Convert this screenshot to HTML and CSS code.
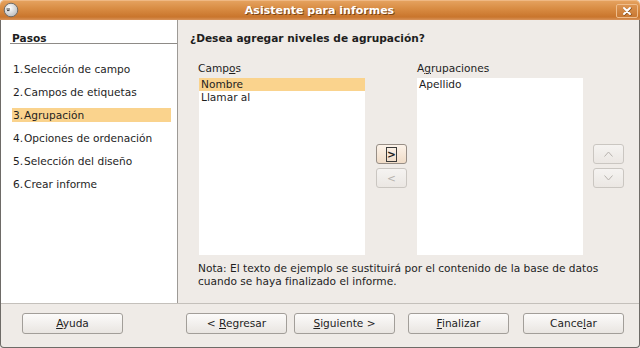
FILE: index.html
```html
<!DOCTYPE html>
<html lang="es">
<head>
    <meta charset="utf-8">
    <title>Asistente para informes</title>
    <link rel="stylesheet" href="styles.css">
</head>
<body>
    <div class="titlebar">
        <svg class="win-icon" width="16" height="16" viewBox="0 0 16 16">
            <defs>
                <radialGradient id="ball" cx="0.4" cy="0.35" r="0.7">
                    <stop offset="0" stop-color="#ffffff"/>
                    <stop offset="1" stop-color="#b9b9b9"/>
                </radialGradient>
            </defs>
            <circle cx="8" cy="8" r="6.8" fill="url(#ball)" stroke="#6e6a66" stroke-width="1"/>
            <path d="M3.5 7h3.5M4 8.6h2.5" stroke="#3b3b3b" stroke-width="1"/>
        </svg>
        <span class="title">Asistente para informes</span>
        <span class="close">
            <svg width="10" height="10" viewBox="0 0 10 10">
                <path d="M2 2l6 6M8 2l-6 6" stroke="#7a4a1e" stroke-width="2.4" stroke-linecap="round" transform="translate(0.5 0.5)"/>
                <path d="M2 2l6 6M8 2l-6 6" stroke="#ffffff" stroke-width="2" stroke-linecap="round"/>
            </svg>
        </span>
    </div>
    <div class="frame">
        <div class="main">
            <!-- lista de pasos -->
            <div class="steps">
                <div class="steps-head">Pasos</div>
                <ul class="step-list">
                    <li><span class="num">1.</span>Selección de campo</li>
                    <li><span class="num">2.</span>Campos de etiquetas</li>
                    <li class="current"><span class="num">3.</span>Agrupación</li>
                    <li><span class="num">4.</span>Opciones de ordenación</li>
                    <li><span class="num">5.</span>Selección del diseño</li>
                    <li><span class="num">6.</span>Crear informe</li>
                </ul>
            </div>
            <div class="page">
                <div class="page-title">¿Desea agregar niveles de agrupación?</div>
                <div class="lists">
                    <div class="col col-fields">
                        <div class="col-label">Camp<u>o</u>s</div>
                        <ul class="listbox">
                            <li class="sel">Nombre</li>
                            <li>Llamar al</li>
                        </ul>
                    </div>
                    <div class="move-btns">
                        <button class="small active"><span class="focus">&gt;</span></button>
                        <button class="small disabled">&lt;</button>
                    </div>
                    <div class="col col-groups">
                        <div class="col-label">A<u>g</u>rupaciones</div>
                        <ul class="listbox">
                            <li>Apellido</li>
                        </ul>
                    </div>
                    <div class="order-btns">
                        <button class="small disabled">
                            <svg width="9" height="6" viewBox="0 0 9 6"><path d="M0.5 5.5L4.5 1l4 4.5" fill="none" stroke="#b6b2ad" stroke-width="1"/></svg>
                        </button>
                        <button class="small disabled">
                            <svg width="9" height="6" viewBox="0 0 9 6"><path d="M0.5 0.5L4.5 5l4-4.5" fill="none" stroke="#b6b2ad" stroke-width="1"/></svg>
                        </button>
                    </div>
                </div>
                <p class="note">Nota: El texto de ejemplo se sustituirá por el contenido de la base de datos<br>cuando se haya finalizado el informe.</p>
            </div>
        </div>
        <div class="footer">
            <button class="btn btn-help"><u>A</u>yuda</button>
            <button class="btn btn-back">&lt; <u>R</u>egresar</button>
            <button class="btn btn-next"><u>S</u>iguiente &gt;</button>
            <button class="btn btn-finish"><u>F</u>inalizar</button>
            <button class="btn btn-cancel">Cance<u>l</u>ar</button>
        </div>
    </div>
</body>
</html>
```

FILE: styles.css
```css
body {
    margin: 0;
    width: 640px;
    height: 348px;
    overflow: hidden;
    font-family: "DejaVu Sans", sans-serif;
    font-size: 10.6px;
    color: #1e1e1e;
    background-color: #efebe7;
}

ul {
    margin: 0;
    padding: 0;
    list-style: none;
}

u {
    text-decoration-thickness: 1px;
    text-underline-offset: 1px;
}

/* barra de titulo */
.titlebar {
    height: 20px;
    display: flex;
    align-items: center;
    border-radius: 5px 5px 0 0;
    background: linear-gradient(#e6a461, #d88b42 45%, #c9752c 85%, #d8935a);
    box-shadow: inset 0 1px 0 #efb883;
}

.win-icon {
    margin-left: 3px;
    flex: none;
}

.title {
    flex: 1;
    text-align: center;
    font-weight: bold;
    font-size: 11px;
    color: #fff;
    text-shadow: 1px 1px 0 #7b4517;
    padding-left: 4px;
}

.close {
    width: 20px;
    height: 12px;
    margin-right: 2px;
    margin-top: 1px;
    display: flex;
    align-items: center;
    justify-content: center;
    border: 1px solid #efbd8b;
    border-radius: 2px;
    background: linear-gradient(#dc9450, #c87832);
}

.frame {
    height: 327px;
    border: 1px solid #6e6b67;
    border-top: none;
    border-radius: 0 0 4px 4px;
    background-color: #efebe7;
}

.main {
    display: flex;
    height: 283px;
    border-bottom: 1px solid #c4c0bb;
}

/* pasos */
.steps {
    width: 176px;
    background-color: #fff;
    border-right: 1px solid #9d9a96;
}

.steps-head {
    margin: 13px 0 0 9px;
    padding-left: 2px;
    line-height: 10px;
    font-weight: bold;
    border-bottom: 1px solid #8e8b87;
}

.step-list {
    margin-top: 18px;
}

.step-list li {
    height: 14px;
    line-height: 14px;
    margin: 0 6px 9px 11px;
    padding-left: 1px;
    white-space: nowrap;
}

.step-list li.current {
    background-color: #fad38d;
}

.num {
    display: inline-block;
    width: 11px;
}

/* pagina */
.page {
    flex: 1;
}

.page-title {
    margin-top: 13px;
    padding-left: 12px;
    line-height: 10px;
    font-weight: bold;
}

.lists {
    display: flex;
    margin: 18px 0 0 20px;
}

.col-label {
    height: 14px;
    line-height: 14px;
    margin-bottom: 3px;
}

.col-fields {
    width: 167px;
}

.col-fields .listbox {
    margin-left: 1px;
}

.col-groups {
    width: 166px;
    margin-left: 10px;
}

.listbox {
    height: 177px;
    background-color: #fff;
}

.listbox li {
    height: 13px;
    line-height: 13px;
    padding-left: 2px;
}

.listbox li.sel {
    background-color: #fad38d;
}

.move-btns,
.order-btns {
    display: flex;
    flex-direction: column;
    gap: 4px;
    padding-top: 83px;
    width: 31px;
}

.move-btns {
    margin-left: 11px;
}

.order-btns {
    margin-left: 10px;
}

button {
    font-family: "DejaVu Sans", sans-serif;
    font-size: 10.6px;
    color: #1e1e1e;
    padding: 0;
    margin: 0;
    border: 1px solid #a29e99;
    border-radius: 3px;
    background: linear-gradient(#fcfbfa, #e9e5e1);
    text-align: center;
}

.small {
    width: 31px;
    height: 20px;
    display: flex;
    align-items: center;
    justify-content: center;
}

.small.disabled {
    color: #b6b2ad;
    border-color: #cac6c1;
    background: linear-gradient(#f5f3f1, #ebe7e3);
}

.small.active {
    border-color: #978e86;
    background: linear-gradient(#fcf3ea, #f0dcc7);
}

.focus {
    display: block;
    width: 9px;
    height: 13px;
    line-height: 13px;
    text-align: center;
    border: 1px solid #3a3a3a;
    font-weight: bold;
}

.note {
    margin: 7px 0 0 20px;
    line-height: 12.5px;
}

/* botones de abajo */
.footer {
    display: flex;
    padding-top: 9px;
}

.btn {
    display: block;
    width: 101px;
    height: 21px;
    line-height: 19px;
    white-space: pre;
}

.btn-help {
    margin-left: 21px;
}

.btn-back {
    margin-left: 63px;
}

.btn-next {
    margin-left: 7px;
}

.btn-finish {
    margin-left: 13px;
}

.btn-cancel {
    margin-left: 14px;
}
```
